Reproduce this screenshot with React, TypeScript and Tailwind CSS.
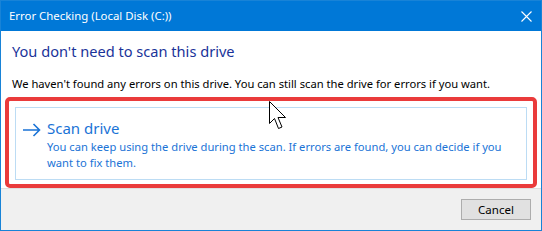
import React from "react";

export default function App() {
  return (
    <div
      className="relative w-[542px] h-[231px] flex flex-col border border-[#1883d7] bg-white overflow-hidden"
      style={{ fontFamily: '"Noto Sans", "Open Sans", sans-serif' }}
    >
      <div className="h-[30px] shrink-0 bg-[#0078d7] flex items-center justify-between pl-[8px] pr-[8px] text-white text-[11.4px]">
        <span>Error Checking (Local Disk (C:))</span>
        <svg width="11" height="11" viewBox="0 0 11 11" className="mr-[1px]">
          <path d="M0.5 0.5 L10.5 10.5 M10.5 0.5 L0.5 10.5" stroke="white" strokeWidth="1.1" />
        </svg>
      </div>
      <div className="flex-1 flex flex-col px-[11px]">
        <div className="mt-[10px] text-[14.6px] leading-[20px] text-[#1a3399]">You don't need to scan this drive</div>
        <div className="mt-[15px] text-[11.2px] leading-[16px] text-black">
          We haven't found any errors on this drive. You can still scan the drive for errors if you want.
        </div>
        <div className="mt-[5px] -mx-[7px] border-[4px] border-[#ea3b3b] rounded-[5px] bg-white p-[6px] pb-[4px]">
          <div className="border border-[#bcdcf4] h-[73px] flex items-start pl-[7px] pt-[10px]">
            <svg width="18" height="14" viewBox="0 0 18 14" className="mt-[5px] shrink-0">
              <path d="M0 7 H16.5 M10.5 1 L16.5 7 L10.5 13" stroke="#1a73d6" strokeWidth="1.6" fill="none" />
            </svg>
            <div className="ml-[6px] flex flex-col text-[#1a73d6]">
              <div className="text-[15px] leading-[21px]">Scan drive</div>
              <div className="text-[11.2px] leading-[16px] w-[462px]">
                You can keep using the drive during the scan. If errors are found, you can decide if you want to fix them.
              </div>
            </div>
          </div>
        </div>
      </div>
      <div className="h-[42px] shrink-0 bg-[#f0f0f0] border-t border-[#dfdfdf] flex items-start justify-end pr-[10px] pt-[10px]">
        <button className="w-[70px] h-[21px] bg-[#e1e1e1] border border-[#adadad] text-[11.5px] leading-[19px] text-black">
          Cancel
        </button>
      </div>
      <svg
        className="absolute left-[268px] top-[100px]"
        width="19"
        height="29"
        viewBox="0 0 19 29"
      >
        <path
          d="M0.5 0.5 L0.5 22.5 L5.5 17.5 L9.5 27.5 L13 26 L9 16.5 L16.5 16.5 Z"
          fill="white"
          stroke="black"
          strokeWidth="1"
        />
      </svg>
    </div>
  );
}
